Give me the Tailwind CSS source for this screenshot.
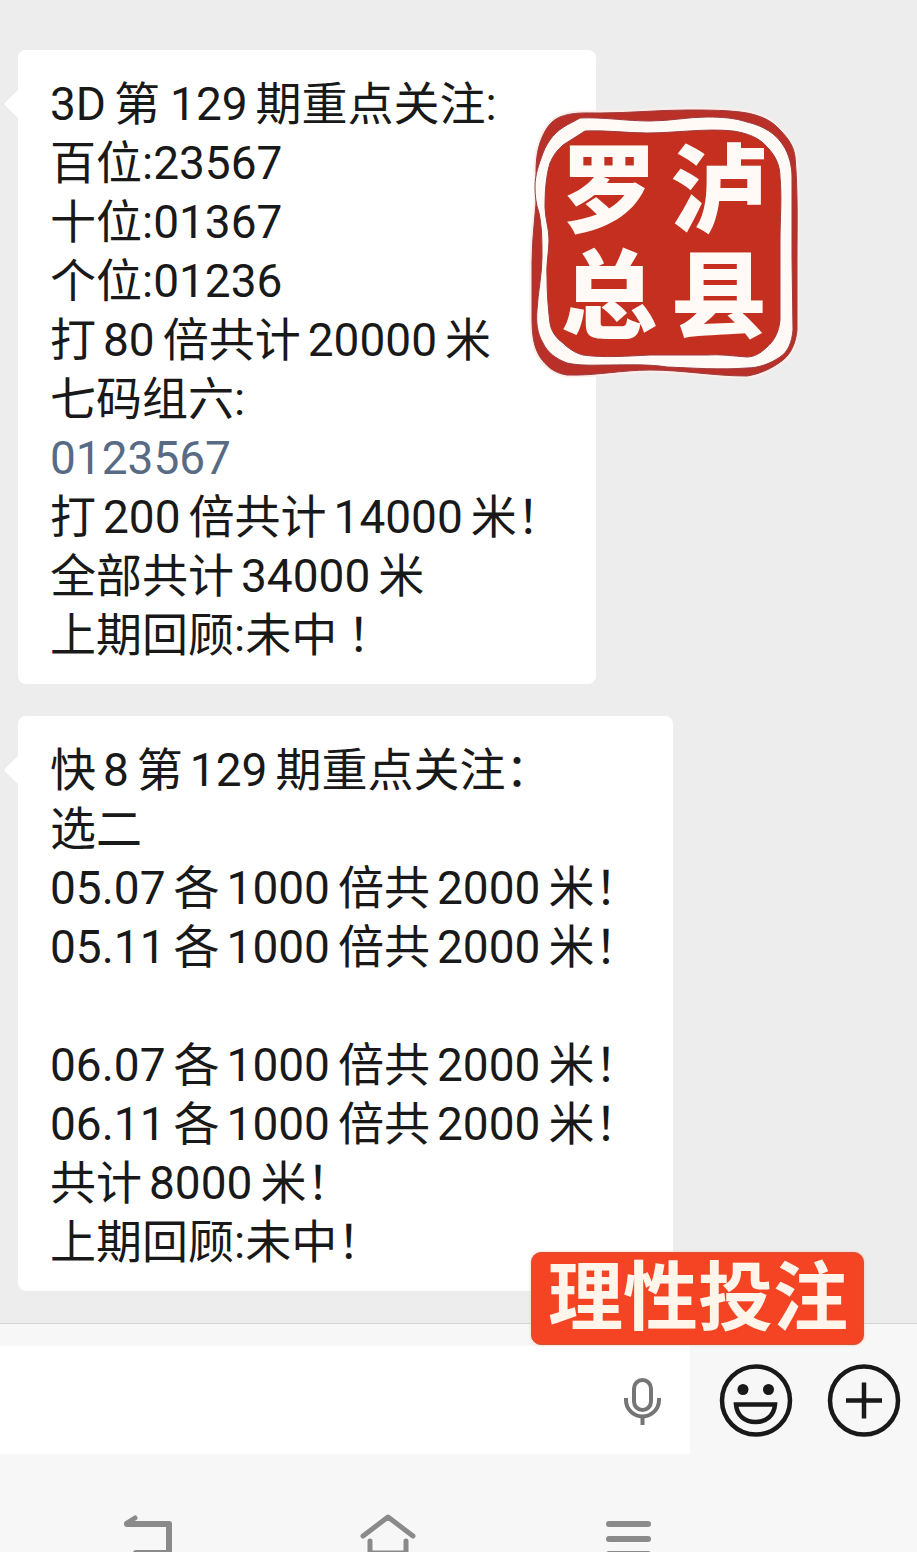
<!DOCTYPE html>
<html lang="zh-CN">
<head>
<meta charset="utf-8">
<meta name="viewport" content="width=device-width, initial-scale=1">
<title>聊天</title>
<script src="https://cdn.jsdelivr.net/npm/@tailwindcss/browser@4"></script>
</head>
<body class="flex min-h-screen flex-col bg-[#f7f7f7] font-[Roboto,'Noto_Sans_CJK_SC',sans-serif] text-[#191919]">
<main class="relative flex flex-col items-start gap-8 bg-[#ededed] px-[18px] pt-[50px] pb-8 text-[46px] leading-[59px]">
  <article class="relative rounded-lg bg-white pt-[25px] pr-[33px] pb-[19px] pl-8 whitespace-nowrap">
    <span class="absolute top-[44px] -left-[10px] size-5 rotate-45 rounded-xs bg-white"></span>
    <p class="relative">3D<span class="ml-2">第</span><span class="mr-2 ml-2.5">129</span>期重点关注:</p>
    <p>百位:23567</p>
    <p>十位:01367</p>
    <p>个位:01236</p>
    <p>打<span class="mr-2 ml-[7px]">80</span>倍共计<span class="mr-2 ml-[7px]">20000</span>米</p>
    <p>七码组六:</p>
    <p><a href="#" class="text-[#576b85]">0123567</a></p>
    <p>打<span class="mr-2 ml-[7px]">200</span>倍共计<span class="mr-2 ml-[7px]">14000</span>米！</p>
    <p>全部共计<span class="mr-2 ml-[7px]">34000</span>米</p>
    <p>上期回顾:未中<span class="ml-2.5">！</span></p>
  </article>
  <article class="relative rounded-lg bg-white pt-[25px] pr-[33px] pb-[19px] pl-8 whitespace-nowrap">
    <span class="absolute top-[44px] -left-[10px] size-5 rotate-45 rounded-xs bg-white"></span>
    <p class="relative">快<span class="mr-2 ml-[7px]">8</span>第<span class="mr-2 ml-[7px]">129</span>期重点关注：</p>
    <p>选二</p>
    <p>05.07<span class="ml-2">各</span><span class="mr-2 ml-[7px]">1000</span>倍共<span class="mr-2 ml-[7px]">2000</span>米！</p>
    <p>05.11<span class="ml-2">各</span><span class="mr-2 ml-[7px]">1000</span>倍共<span class="mr-2 ml-[7px]">2000</span>米！</p>
    <p><br></p>
    <p>06.07<span class="ml-2">各</span><span class="mr-2 ml-[7px]">1000</span>倍共<span class="mr-2 ml-[7px]">2000</span>米！</p>
    <p>06.11<span class="ml-2">各</span><span class="mr-2 ml-[7px]">1000</span>倍共<span class="mr-2 ml-[7px]">2000</span>米！</p>
    <p>共计<span class="mr-2 ml-[7px]">8000</span>米！</p>
    <p>上期回顾:未中！</p>
  </article>

  <!-- Seal stamp -->
  <div class="absolute top-[106px] left-[528px] h-[272px] w-[272px]">
    <svg class="absolute inset-0" viewBox="0 0 272 272" width="272" height="272" aria-hidden="true" stroke-linejoin="round">
      <path fill="#fdeee9" stroke="#fdeee9" stroke-width="5" d="M32 11C44 6 58 7 72 7C102 7 130 4 159 4C180 4 202 4 219 7C234 10 244 15 252 24C262 34 266 42 267 51C270 85 269 118 269 151L269 224C268 236 263 248 255 254C245 262 232 268 219 270C185 270 155 264 122 264C94 264 66 270 39 269C26 267 18 260 12 251C5 240 4 226 4 211L4 157C4 130 8 106 9 81C7 66 8 48 12 37C16 25 22 15 32 11Z"/>
      <path fill="#b93029" stroke="#a03a3e" stroke-width="1" d="M32 11C44 6 58 7 72 7C102 7 130 4 159 4C180 4 202 4 219 7C234 10 244 15 252 24C262 34 266 42 267 51C270 85 269 118 269 151L269 224C268 236 263 248 255 254C245 262 232 268 219 270C185 270 155 264 122 264C94 264 66 270 39 269C26 267 18 260 12 251C5 240 4 226 4 211L4 157C4 130 8 106 9 81C7 66 8 48 12 37C16 25 22 15 32 11Z"/>
      <path fill="#fffaf5" stroke="#a03a3e" stroke-width="1" d="M52 12C76 11 98 15 122 15C142 15 160 11 179 11C194 11 207 12 219 16C236 20 248 28 255 39C261 48 264 60 264 71L264 151L265 224C264 236 260 246 252 251C242 258 230 262 219 262C192 264 165 262 139 261C120 258 100 259 82 259C66 259 52 260 39 257C28 253 19 246 15 237C9 227 8 216 9 204C10 186 14 168 14 151C14 136 14 121 11 107C8 98 7 90 7 81C7 68 11 58 15 47C20 34 28 25 39 19Z"/>
      <path fill="#c42f1f" stroke="#a03a3e" stroke-width="1" d="M57 25C78 24 98 27 119 27C148 27 178 22 205 25C219 27 232 32 239 41C248 50 252 60 252 71C254 92 252 113 252 134L252 214C251 226 246 235 239 241C233 247 226 251 219 251C205 250 192 248 179 249L122 249C100 250 76 252 55 249C47 247 40 242 35 237C28 232 23 225 22 217C20 202 19 186 19 171C18 158 21 146 21 134C21 122 17 112 17 101C17 86 18 70 22 57C25 50 29 44 35 39Z"/>
    </svg>
    <div class="absolute inset-x-[26px] top-[36px] grid grid-cols-2 justify-items-center gap-y-2 text-[96px] leading-[98px] font-black text-[#fffaf5]">
      <span>罗</span><span>泸</span><span>总</span><span>县</span>
    </div>
  </div>
  <!-- Notice sticker over the chat and the input bar -->
  <div class="absolute -bottom-[22px] left-[531px] z-10 rounded-[10px] border border-[#d8503a] bg-[#f54423] pr-[15px] pl-4 text-[75px] leading-[91px] font-bold whitespace-nowrap text-[#fff5ea] shadow-[0_0_3px_#ffc4a8]">理性投注</div>
</main>

<footer class="flex flex-1 flex-col border-t border-[#d4d4d4]">
  <form class="mt-[22px] flex items-center">
    <div class="relative flex h-[108px] flex-1 items-center bg-white">
      <input type="text" aria-label="消息" class="h-full w-full bg-transparent pr-24 pl-8 text-[46px] outline-none">
      <button type="button" aria-label="语音输入" class="absolute right-7">
        <svg width="40" height="50" viewBox="0 0 40 50" fill="none" stroke="#757575" stroke-width="4"><rect x="12" y="5" width="17" height="30" rx="8.5"/><path d="M4 23V25A16.5 16.5 0 0 0 37 25V23M20.500 41V50"/></svg>
      </button>
    </div>
    <div class="flex gap-[34px] pr-4 pl-[29px]">
      <button type="button" aria-label="表情">
        <svg width="74" height="74" viewBox="0 0 74 74" fill="none" stroke="#191919" stroke-width="4.500"><circle cx="37" cy="37.500" r="34"/><circle cx="24" cy="26.500" r="5.500" fill="#191919" stroke="none"/><circle cx="49.500" cy="26.500" r="5.500" fill="#191919" stroke="none"/><path d="M17 41.500H56C55 53 47 59 36.500 59C26 59 18 53 17 41.500Z"/></svg>
      </button>
      <button type="button" aria-label="更多">
        <svg width="74" height="74" viewBox="0 0 74 74" fill="none" stroke="#191919" stroke-width="4.500"><circle cx="37" cy="37.500" r="34"/><path d="M37 19.500V55.500M19 37.500H55"/></svg>
      </button>
    </div>
  </form>
  <nav class="mt-auto flex justify-between pr-[28%] pl-[116px]" aria-label="系统导航">
    <button type="button" aria-label="返回"><svg width="64" height="40" viewBox="0 0 64 40" fill="none" stroke="#8a8a8a" stroke-width="6" stroke-linecap="round" stroke-linejoin="round"><path d="M11 12H53V41H20"/><path d="M11 11L19 6" stroke-width="5"/></svg></button>
    <button type="button" aria-label="主页"><svg width="64" height="40" viewBox="0 0 64 40" fill="none" stroke="#8a8a8a" stroke-width="5" stroke-linecap="round" stroke-linejoin="round"><path d="M7 24L32 5L57 24M14 29V41H50V29"/></svg></button>
    <button type="button" aria-label="最近任务"><svg width="64" height="40" viewBox="0 0 64 40" fill="none" stroke="#8a8a8a" stroke-width="6" stroke-linecap="round"><path d="M13 12H52M13 27H52M13 42H52"/></svg></button>
  </nav>
</footer>
</body>
</html>
